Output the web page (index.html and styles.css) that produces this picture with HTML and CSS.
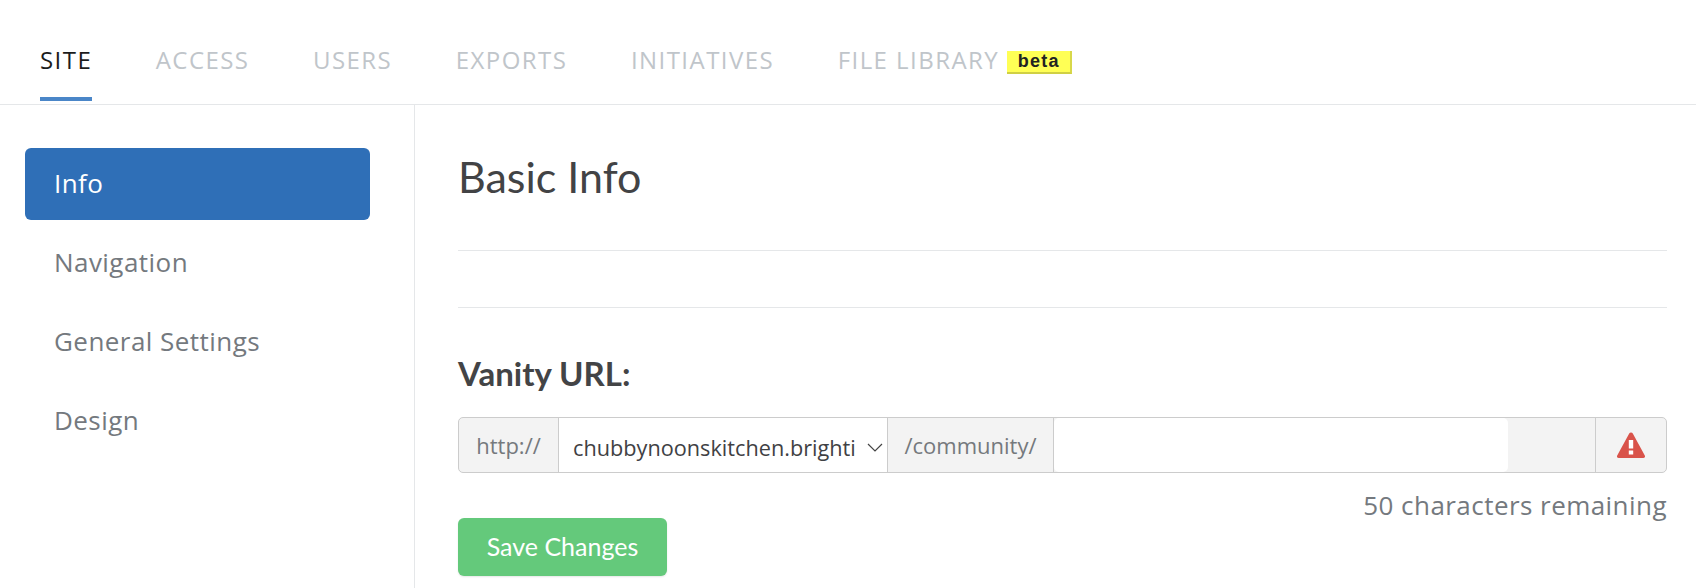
FILE: index.html
```html
<!DOCTYPE html>
<html lang="en">
<head>
    <meta charset="UTF-8">
    <meta name="viewport" content="width=device-width, initial-scale=1.0">
    <title>Site Settings</title>
    <link rel="stylesheet" href="styles.css">
</head>
<body>

    <div class="tabs">
        <a class="tab active">SITE</a>
        <a class="tab">ACCESS</a>
        <a class="tab">USERS</a>
        <a class="tab">EXPORTS</a>
        <a class="tab">INITIATIVES</a>
        <a class="tab">FILE LIBRARY<span class="beta">beta</span></a>
    </div>

    <div class="layout">
        <div class="sidebar">
            <a class="side-link active">Info</a>
            <a class="side-link">Navigation</a>
            <a class="side-link">General Settings</a>
            <a class="side-link">Design</a>
        </div>

        <div class="content">
            <h1 class="page-title">Basic Info</h1>
            <hr class="rule">
            <hr class="rule rule-second">

            <h2 class="field-title">Vanity URL:</h2>
            <div class="url-group">
                <span class="addon addon-http">http://</span>
                <div class="domain-select">
                    <span class="domain-text">chubbynoonskitchen.brighti</span>
                    <svg class="chevron" viewBox="0 0 16 9" width="16" height="9">
                        <path d="M1 1l7 7 7-7" fill="none" stroke="#444" stroke-width="1.2"/>
                    </svg>
                </div>
                <span class="addon addon-path">/community/</span>
                <input class="url-input" type="text">
                <span class="addon addon-status">
                    <svg viewBox="0 0 30 28" width="30" height="28">
                        <path d="M15 1.5c.8 0 1.4.4 1.8 1.1l12 22c.7 1.3-.1 2.4-1.5 2.4H2.700c-1.400 0-2.200-1.100-1.500-2.400l12-22c.4-.7 1-1.100 1.800-1.100z" fill="#d9534a"/>
                        <rect x="12.800" y="9" width="4.400" height="8.500" fill="#fff"/>
                        <rect x="12.800" y="19.500" width="4.400" height="4" fill="#fff"/>
                    </svg>
                </span>
            </div>
            <div class="char-count">50 characters remaining</div>
            <button class="save-button">Save Changes</button>
        </div>
    </div>

</body>
</html>
```

FILE: styles.css
```css
html, body {
    height: 100%;
}
body {
    margin: 0;
    background-color: #fff;
    font-family: "Open Sans", sans-serif;
    overflow: hidden;
}
.tabs {
    display: flex;
    align-items: flex-start;
    height: 104px;
    padding-left: 40px;
    gap: 63.5px;
    border-bottom: 1px solid #e5e7e9;
}
.tab {
    display: flex;
    align-items: center;
    height: 101px;
    padding-top: 21px;
    box-sizing: border-box;
    border-bottom: 4px solid transparent;
    font-size: 24px;
    letter-spacing: 1.45px;
    color: #c0c5ca;
}
.tab.active {
    color: #1c1c1c;
    border-bottom-color: #4a86c8;
}
.beta {
    margin-left: 8px;
    margin-top: 7px;
    width: 65px;
    height: 23px;
    box-sizing: border-box;
    background-color: #ffff55;
    border-right: 2px solid #d8d84a;
    border-bottom: 2px solid #d0d044;
    font-family: "Liberation Sans", sans-serif;
    font-size: 18px;
    font-weight: bold;
    letter-spacing: 1.2px;
    line-height: 21px;
    text-align: center;
    color: #222;
}
.layout {
    display: flex;
    height: 483px;
}
.sidebar {
    width: 415px;
    box-sizing: border-box;
    border-right: 1px solid #e5e7e9;
    padding: 43px 0 0 25px;
}
.side-link {
    display: flex;
    align-items: center;
    width: 345px;
    height: 72px;
    margin-bottom: 7px;
    padding-left: 29px;
    padding-bottom: 2px;
    box-sizing: border-box;
    border-radius: 6px;
    font-size: 26px;
    letter-spacing: 0.45px;
    color: #74797e;
}
.side-link.active {
    background-color: #2f6fb7;
    color: #fff;
}
.content {
    flex: 1;
    padding: 0 29px 0 43px;
}
.page-title {
    margin: 46px 0 0 0;
    font-family: Lato, sans-serif;
    font-size: 43px;
    line-height: 52px;
    font-weight: 400;
    color: #424345;
}
.rule {
    margin: 47px 0 0 0;
    border: none;
    border-top: 1px solid #e5e7e9;
}
.rule-second {
    margin-top: 56px;
}
.field-title {
    margin: 45px 0 0 0;
    font-family: Lato, sans-serif;
    font-size: 33px;
    line-height: 40px;
    font-weight: bold;
    color: #434446;
}
.url-group {
    display: flex;
    height: 56px;
    margin-top: 24px;
    box-sizing: border-box;
    border: 1px solid #cccccc;
    border-radius: 5px;
    background-color: #f3f3f3;
}
.addon {
    display: flex;
    align-items: center;
    justify-content: center;
    padding-bottom: 1px;
    box-sizing: border-box;
    font-size: 22px;
    color: #75797d;
}
.addon-http {
    width: 100px;
    border-right: 1px solid #cccccc;
}
.domain-select {
    display: flex;
    align-items: center;
    justify-content: space-between;
    width: 329px;
    padding: 4px 4px 0 14px;
    box-sizing: border-box;
    background-color: #fff;
    border-right: 1px solid #cccccc;
}
.domain-text {
    font-size: 21.7px;
    white-space: nowrap;
    color: #3f4144;
}
.chevron {
    flex: none;
}
.addon-path {
    width: 166px;
    border-right: 1px solid #cccccc;
}
.url-input {
    width: 454px;
    height: 100%;
    padding: 0;
    box-sizing: border-box;
    border: none;
    border-radius: 5px;
    background-color: #fff;
}
.addon-status {
    margin-left: 87px;
    flex: 1;
    border-left: 1px solid #cccccc;
}
.char-count {
    margin-top: 17px;
    text-align: right;
    font-size: 26px;
    line-height: 30px;
    letter-spacing: 0.45px;
    color: #74797e;
}
.save-button {
    display: block;
    width: 209px;
    height: 58px;
    margin-top: -2px;
    padding-bottom: 4px;
    border: none;
    border-radius: 6px;
    background-color: #64c97b;
    font-family: Lato, sans-serif;
    font-size: 25px;
    color: #fff;
    box-shadow: 0 1px 2px rgba(0, 0, 0, 0.1);
}
```
